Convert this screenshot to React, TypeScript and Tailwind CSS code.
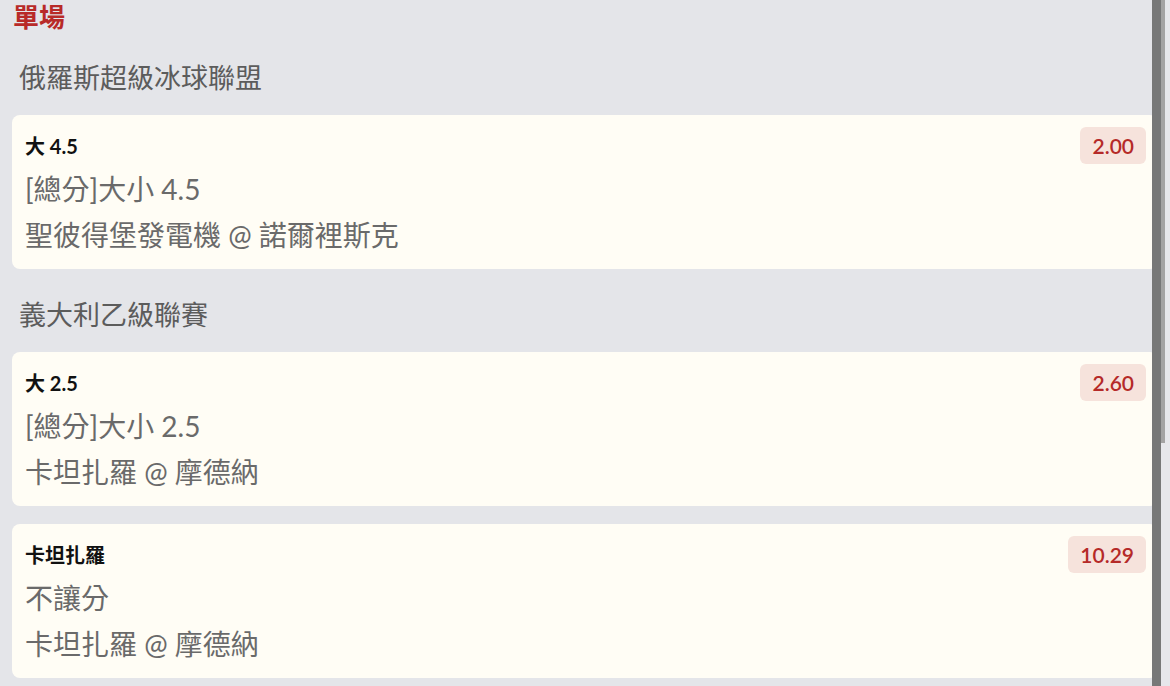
import React from 'react';

type Bet = {
  pick: string;
  odds: string;
  market: string;
  match: string;
};

type League = {
  name: string;
  bets: Bet[];
};

const LEAGUES: League[] = [
  {
    name: '俄羅斯超級冰球聯盟',
    bets: [{ pick: '大 4.5', odds: '2.00', market: '[總分]大小 4.5', match: '聖彼得堡發電機 @ 諾爾裡斯克' }],
  },
  {
    name: '義大利乙級聯賽',
    bets: [
      { pick: '大 2.5', odds: '2.60', market: '[總分]大小 2.5', match: '卡坦扎羅 @ 摩德納' },
      { pick: '卡坦扎羅', odds: '10.29', market: '不讓分', match: '卡坦扎羅 @ 摩德納' },
    ],
  },
];

const BetCard: React.FC<{ bet: Bet }> = ({ bet }) => (
  <div className="bg-[#fffdf5] rounded-lg pl-[13px] pr-3 pt-[11px] pb-[11px] flex justify-between items-start">
    <div>
      <div className="h-[40px] leading-[40px] text-[20px] font-bold text-[#111]">{bet.pick}</div>
      <div className="leading-[46px] text-[28px] text-[#6a6a6a]">{bet.market}</div>
      <div className="leading-[46px] text-[28px] text-[#6a6a6a]">{bet.match}</div>
    </div>
    <span className="mt-[1px] px-3 h-[37px] leading-[37px] rounded-md bg-[#f6e3dc] text-[21px] font-semibold text-[#b52a28]">
      {bet.odds}
    </span>
  </div>
);

export default function App() {
  return (
    <div
      className="relative w-[1170px] h-[686px] overflow-hidden bg-[#e4e5e9]"
      style={{ fontFamily: 'Lato, "Noto Sans CJK TC", sans-serif' }}
    >
      <div className="px-3">
        <h2 className="pl-[1px] pt-[2px] leading-[30px] text-[26px] font-bold text-[#b82a28]">單場</h2>
        {LEAGUES.map(league => (
          <div key={league.name}>
            <div className="pl-[7px] pt-[23px] pb-[14px] leading-[46px] text-[27px] text-[#5c5c5c]">
              {league.name}
            </div>
            <div className="flex flex-col gap-[18px]">
              {league.bets.map((bet, i) => (
                <BetCard key={i} bet={bet} />
              ))}
            </div>
          </div>
        ))}
      </div>

      {/* overlay scrollbar */}
      <div className="absolute top-0 right-0 h-full w-[18px] flex">
        <div className="w-[9px] h-full bg-[#777878]" />
        <div className="flex-1 flex flex-col bg-[#e6e7eb]">
          <div className="w-[4px] h-[443px] bg-[#a3a3a3]" />
        </div>
      </div>
    </div>
  );
}
